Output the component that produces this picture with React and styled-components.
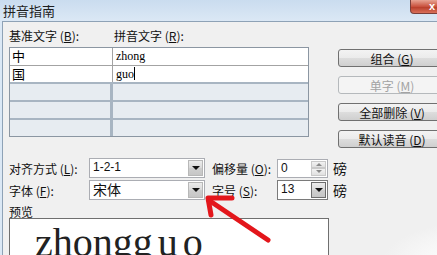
import React from 'react';
import styled, { createGlobalStyle } from 'styled-components';

const GlobalStyle = createGlobalStyle`
  html, body { margin: 0; padding: 0; overflow: hidden; }
  body {
    width: 437px;
    height: 255px;
    background: #d6e4f2;
    font-family: "Noto Sans CJK SC", "Liberation Sans", sans-serif;
  }
  * { box-sizing: border-box; }
`;

const Window = styled.div`
  position: relative;
  width: 437px;
  height: 255px;
  overflow: hidden;
  background: linear-gradient(#cadcef, #dbe8f5 21px);
`;

const TitleBar = styled.div`
  height: 21px;
  padding-left: 3px;
  font-size: 13px;
  line-height: 21px;
  color: #1f1f1f;
`;

const CloseButton = styled.div`
  position: absolute;
  top: 0;
  left: 410px;
  width: 44px;
  height: 14px;
  border: 1px solid #7a3f3a;
  border-top: none;
  border-radius: 0 0 4px 4px;
  background: linear-gradient(#e8a493, #c9523e 50%, #b53a26 51%, #d9705a);
  color: #fff;
  font: bold 11px/12px "Liberation Sans", sans-serif;
  padding-left: 18px;
`;

const Body = styled.div`
  margin-left: 2px;
  width: 480px;
  height: 234px;
  border-top: 1px solid #8ea2b6;
  border-left: 1px solid #8ea2b6;
  background: radial-gradient(ellipse 90px 40px at 470px 240px, #ffffff 0%, #f7f7f7 60%, #f0f0f0 100%), #f0f0f0;
  padding: 6px 0 0 6px;
`;

const Top = styled.div`
  display: flex;
  align-items: flex-start;
`;

const LeftPane = styled.div`
  width: 300px;
`;

const LabelRow = styled.div`
  display: flex;
  height: 16px;
  margin-bottom: 3px;
  font-size: 12px;
  line-height: 16px;
  color: #111;
`;

const Label = styled.span`
  width: ${p => p.$w || 'auto'};
  flex: none;
  white-space: nowrap;
  font-size: 12px;
  color: #111;
  u { text-decoration: underline; }
`;

const Table = styled.div`
  width: 300px;
  border: 1px solid #8b96a2;
  background: #f0f0f0;
`;

const Row = styled.div`
  display: grid;
  grid-template-columns: 103px 1fr;
  height: ${p => (p.$empty ? '18px' : '17px')};
  border-top: ${p => (p.$empty ? '2px solid #a8b5c2' : p.$first ? 'none' : '1px solid #a3a3a3')};
`;

const Cell = styled.div`
  background: ${p => (p.$empty ? '#e7ecf1' : '#ffffff')};
  border-right: ${p => (p.$left ? (p.$empty ? '3px solid #a8b5c2' : '1px solid #a3a3a3') : 'none')};
  font-size: ${p => (p.$serif ? '12px' : '13px')};
  font-family: ${p => (p.$serif ? '"Liberation Serif", serif' : '"Noto Sans CJK SC", sans-serif')};
  line-height: 16px;
  padding-left: ${p => (p.$serif ? '3px' : '2px')};
  color: #000;
  span.caret {
    display: inline-block;
    width: 1px;
    height: 13px;
    background: #000;
    vertical-align: -2px;
  }
`;

const ButtonColumn = styled.div`
  margin-left: 29px;
  padding-top: 21px;
  display: flex;
  flex-direction: column;
  gap: 9px;
`;

const Button = styled.button`
  width: 108px;
  height: 18px;
  padding: 0;
  border: 1px solid ${p => (p.disabled ? '#b5b9bc' : '#707070')};
  border-radius: 3px;
  background: ${p =>
    p.disabled
      ? '#f4f4f4'
      : 'linear-gradient(#f3f3f3, #ebebeb 50%, #dddddd 51%, #cfcfcf)'};
  color: ${p => (p.disabled ? '#a3a3a3' : '#111')};
  font-family: "Noto Sans CJK SC", sans-serif;
  font-size: 12px;
  line-height: 15px;
  text-align: center;
  u { text-decoration: underline; }
`;

const Form = styled.div`
  margin-top: 10px;
  display: flex;
  flex-direction: column;
  gap: 2px;
`;

const FormRow = styled.div`
  display: flex;
  align-items: center;
  height: 20px;
`;

const Combo = styled.div`
  width: ${p => p.$w};
  height: ${p => p.$h || '20px'};
  flex: none;
  display: flex;
  align-items: stretch;
  border: 1px solid ${p => (p.$focus ? '#7a7a7a' : '#abadb3')};
  background: #fff;
`;

const ComboText = styled.div`
  flex: 1;
  padding-left: 3px;
  font-family: ${p => (p.$cjk ? '"Noto Sans CJK SC", sans-serif' : '"Liberation Sans", sans-serif')};
  font-size: ${p => (p.$cjk ? '14px' : '12px')};
  line-height: 17px;
  color: #111;
`;

const DropButton = styled.div`
  width: 15px;
  margin: 1px;
  display: flex;
  align-items: center;
  justify-content: center;
  border: 1px solid ${p => (p.$focus ? '#6d6d6d' : '#b8b8b8')};
  background: linear-gradient(#ececec, #d9d9d9 50%, #cfcfcf 51%, #c6c6c6);
  &::after {
    content: "";
    border-left: 4px solid transparent;
    border-right: 4px solid transparent;
    border-top: 4px solid #111;
  }
`;

const Spin = styled.div`
  width: 15px;
  margin: 1px;
  display: flex;
  flex-direction: column;
`;

const SpinHalf = styled.div`
  flex: 1;
  display: flex;
  align-items: center;
  justify-content: center;
  border: 1px solid #c9c9c9;
  background: linear-gradient(#f2f2f2, #e0e0e0);
  &::after {
    content: "";
    border-left: 3px solid transparent;
    border-right: 3px solid transparent;
    ${p => (p.$down ? 'border-top: 3px solid #8a8a8a;' : 'border-bottom: 3px solid #8a8a8a;')}
  }
`;

const Unit = styled.span`
  margin-left: 5px;
  font-size: 14px;
  color: #111;
`;

const PreviewLabel = styled.div`
  margin-top: 5px;
  height: 13px;
  font-size: 12px;
  line-height: 13px;
  color: #111;
`;

const Preview = styled.div`
  width: 320px;
  height: 60px;
  border: 1px solid #6f6f6f;
  background: #fff;
  padding: 4px 0 0 25px;
  font-family: "Liberation Serif", serif;
  font-size: 40px;
  line-height: 40px;
  color: #222;
  white-space: nowrap;
`;

const Spread = styled.span`
  letter-spacing: 5px;
`;

const Arrow = styled.svg`
  position: absolute;
  left: 0;
  top: 0;
  pointer-events: none;
`;

const rows = [
  { base: '中', ruby: 'zhong' },
  { base: '国', ruby: 'guo', caret: true },
  null,
  null,
  null,
];

export default function App() {
  return (
    <>
      <GlobalStyle />
      <Window>
        <TitleBar>拼音指南</TitleBar>
        <CloseButton>x</CloseButton>
        <Body>
          <Top>
            <LeftPane>
              <LabelRow>
                <Label $w="105px">基准文字 (<u>B</u>):</Label>
                <Label>拼音文字 (<u>R</u>):</Label>
              </LabelRow>
              <Table>
                {rows.map((r, i) =>
                  r ? (
                    <Row key={i} $first={i === 0}>
                      <Cell $left>{r.base}</Cell>
                      <Cell $serif>
                        {r.ruby}
                        {r.caret && <span className="caret" />}
                      </Cell>
                    </Row>
                  ) : (
                    <Row key={i} $empty>
                      <Cell $left $empty />
                      <Cell $empty />
                    </Row>
                  )
                )}
              </Table>
            </LeftPane>
            <ButtonColumn>
              <Button>组合 (<u>G</u>)</Button>
              <Button disabled>单字 (<u>M</u>)</Button>
              <Button>全部删除 (<u>V</u>)</Button>
              <Button>默认读音 (<u>D</u>)</Button>
            </ButtonColumn>
          </Top>
          <Form>
            <FormRow>
              <Label $w="80px">对齐方式 (<u>L</u>):</Label>
              <Combo $w="116px">
                <ComboText>1-2-1</ComboText>
                <DropButton />
              </Combo>
              <Label $w="65px" style={{ marginLeft: 7 }}>偏移量 (<u>O</u>):</Label>
              <Combo $w="51px" $h="19px">
                <ComboText>0</ComboText>
                <Spin>
                  <SpinHalf />
                  <SpinHalf $down />
                </Spin>
              </Combo>
              <Unit>磅</Unit>
            </FormRow>
            <FormRow>
              <Label $w="80px">字体 (<u>F</u>):</Label>
              <Combo $w="116px">
                <ComboText $cjk>宋体</ComboText>
                <DropButton />
              </Combo>
              <Label $w="65px" style={{ marginLeft: 7 }}>字号 (<u>S</u>):</Label>
              <Combo $w="51px" $focus>
                <ComboText>13</ComboText>
                <DropButton $focus />
              </Combo>
              <Unit>磅</Unit>
            </FormRow>
          </Form>
          <PreviewLabel>预览</PreviewLabel>
          <Preview>
            zhong<Spread>guo</Spread>
          </Preview>
        </Body>
        <Arrow width="437" height="255" viewBox="0 0 437 255">
          <g fill="none" stroke="#e3161b" strokeWidth="5" strokeLinecap="round" strokeLinejoin="round">
            <path d="M268 240 L210 201" />
            <path d="M232 198 L208 198 L211 215" />
          </g>
        </Arrow>
      </Window>
    </>
  );
}
